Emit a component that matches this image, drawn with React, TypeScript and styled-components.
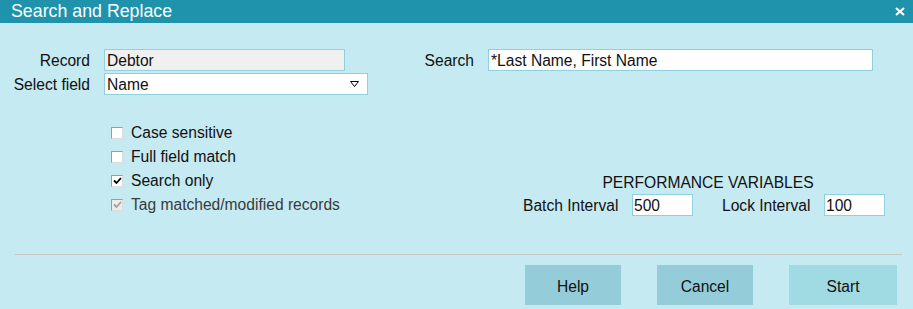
import styled, { createGlobalStyle } from 'styled-components';

const GlobalStyle = createGlobalStyle`
	html, body {
		margin: 0;
		padding: 0;
		background: #c5eaf2;
	}
	* {
		box-sizing: border-box;
	}
`;

const Dialog = styled.div`
	width: 913px;
	height: 309px;
	background: #c5eaf2;
	font-family: 'Liberation Sans', Arial, sans-serif;
	font-size: 15.6px;
	color: #111;
	overflow: hidden;
`;

const TitleBar = styled.div`
	height: 23px;
	background: #1e93ab;
	color: #fff;
	display: flex;
	align-items: center;
	justify-content: space-between;
	padding: 0 7px 0 11px;
`;

const Title = styled.span`
	font-size: 17.8px;
	line-height: 23px;
`;

const CloseButton = styled.button`
	border: none;
	background: none;
	padding: 0;
	width: 12px;
	height: 12px;
	display: flex;
	align-items: center;
	justify-content: center;
	cursor: pointer;
`;

const Body = styled.div`
	padding-top: 26px;
`;

const TopRow = styled.div`
	display: flex;
	align-items: flex-start;
`;

const FieldColumn = styled.div`
	display: flex;
	flex-direction: column;
	gap: 2px;
`;

const FieldRow = styled.div`
	display: flex;
	align-items: center;
	height: 22px;
`;

const Label = styled.span<{ $width: number }>`
	width: ${(p) => p.$width}px;
	text-align: right;
	padding: 2px 14px 0 0;
	white-space: nowrap;
	line-height: 20px;
`;

const TextBox = styled.div<{ $width: number; $readOnly?: boolean }>`
	width: ${(p) => p.$width}px;
	height: 22px;
	border: 1px solid #8ed2df;
	background: ${(p) => (p.$readOnly ? '#f0f0f0' : '#fff')};
	padding: 2px 2px 0;
	line-height: 18px;
	white-space: nowrap;
	display: flex;
	align-items: center;
	justify-content: space-between;
`;

const Arrow = styled.svg`
	margin: 0 6px 2px 0;
`;

const MiddleRow = styled.div`
	display: flex;
	align-items: flex-end;
	margin-top: 26px;
`;

const CheckList = styled.div`
	display: flex;
	flex-direction: column;
	margin-left: 111px;
`;

const CheckRow = styled.label<{ $disabled?: boolean }>`
	display: flex;
	align-items: center;
	gap: 8px;
	height: 24px;
	color: ${(p) => (p.$disabled ? '#3a3a3a' : '#111')};
`;

const Box = styled.span<{ $disabled?: boolean }>`
	width: 12px;
	height: 12px;
	border: 1px solid #9c9c9c;
	border-right-color: #dcdcdc;
	border-bottom-color: #dcdcdc;
	background: ${(p) => (p.$disabled ? '#ececec' : '#fff')};
	display: flex;
	align-items: center;
	justify-content: center;
`;

const Performance = styled.div`
	margin-left: auto;
	margin-right: 28px;
	margin-bottom: 1px;
	display: flex;
	flex-direction: column;
	align-items: center;
	gap: 1px;
`;

const Heading = styled.div`
	line-height: 20px;
	padding-left: 8px;
`;

const PerfRow = styled.div`
	display: flex;
	align-items: center;
	height: 22px;
`;

const PerfLabel = styled.span<{ $width: number }>`
	width: ${(p) => p.$width}px;
	padding-top: 2px;
	white-space: nowrap;
`;

const NumberBox = styled.div<{ $after?: number }>`
	width: 61px;
	height: 22px;
	border: 1px solid #8ed2df;
	background: #fff;
	padding: 2px 1px 0;
	line-height: 18px;
	margin-right: ${(p) => p.$after ?? 0}px;
`;

const Divider = styled.hr`
	border: none;
	border-top: 1px solid #c5c5c5;
	margin: 37px 11px 0 15px;
	height: 0;
`;

const ButtonBar = styled.div`
	display: flex;
	justify-content: flex-end;
	gap: 36px;
	padding: 10px 16px 0 0;
`;

const Button = styled.button<{ $width: number; $primary?: boolean }>`
	width: ${(p) => p.$width}px;
	height: 40px;
	border: none;
	padding: 3px 0 0;
	background: ${(p) => (p.$primary ? '#a0dae3' : '#94cdd9')};
	font-family: inherit;
	font-size: 15.6px;
	color: #111;
	cursor: pointer;
`;

const Check = ({ color }: { color: string }) => (
	<svg width="9" height="8" viewBox="0 0 9 8">
		<path d="M1 3.5 L3.5 6 L8 1" fill="none" stroke={color} strokeWidth="1.8" />
	</svg>
);

const options = [
	{ label: 'Case sensitive', checked: false },
	{ label: 'Full field match', checked: false },
	{ label: 'Search only', checked: true },
	{ label: 'Tag matched/modified records', checked: true, disabled: true },
];

const App = () => {
	return (
		<Dialog>
			<GlobalStyle />
			<TitleBar>
				<Title>Search and Replace</Title>
				<CloseButton>
					<svg width="10" height="9" viewBox="0 0 10 9">
						<path d="M1 1 L9 8 M9 1 L1 8" stroke="#fff" strokeWidth="2.2" />
					</svg>
				</CloseButton>
			</TitleBar>
			<Body>
				<TopRow>
					<FieldColumn>
						<FieldRow>
							<Label $width={104}>Record</Label>
							<TextBox $width={241} $readOnly>
								Debtor
							</TextBox>
						</FieldRow>
						<FieldRow>
							<Label $width={104}>Select field</Label>
							<TextBox $width={264}>
								Name
								<Arrow width="9" height="6" viewBox="0 0 9 6">
									<path d="M0.5 0.5 H8.5 L4.5 5.5 Z" fill="none" stroke="#000" strokeWidth="1" />
								</Arrow>
							</TextBox>
						</FieldRow>
					</FieldColumn>
					<FieldRow>
						<Label $width={120}>Search</Label>
						<TextBox $width={385}>*Last Name, First Name</TextBox>
					</FieldRow>
				</TopRow>
				<MiddleRow>
					<CheckList>
						{options.map((o) => (
							<CheckRow key={o.label} $disabled={o.disabled}>
								<Box $disabled={o.disabled}>
									{o.checked && <Check color={o.disabled ? '#a0a0a0' : '#000'} />}
								</Box>
								{o.label}
							</CheckRow>
						))}
					</CheckList>
					<Performance>
						<Heading>PERFORMANCE VARIABLES</Heading>
						<PerfRow>
							<PerfLabel $width={109}>Batch Interval</PerfLabel>
							<NumberBox $after={29}>500</NumberBox>
							<PerfLabel $width={102}>Lock Interval</PerfLabel>
							<NumberBox>100</NumberBox>
						</PerfRow>
					</Performance>
				</MiddleRow>
				<Divider />
				<ButtonBar>
					<Button $width={96}>Help</Button>
					<Button $width={96}>Cancel</Button>
					<Button $width={108} $primary>
						Start
					</Button>
				</ButtonBar>
			</Body>
		</Dialog>
	);
};

export default App;
